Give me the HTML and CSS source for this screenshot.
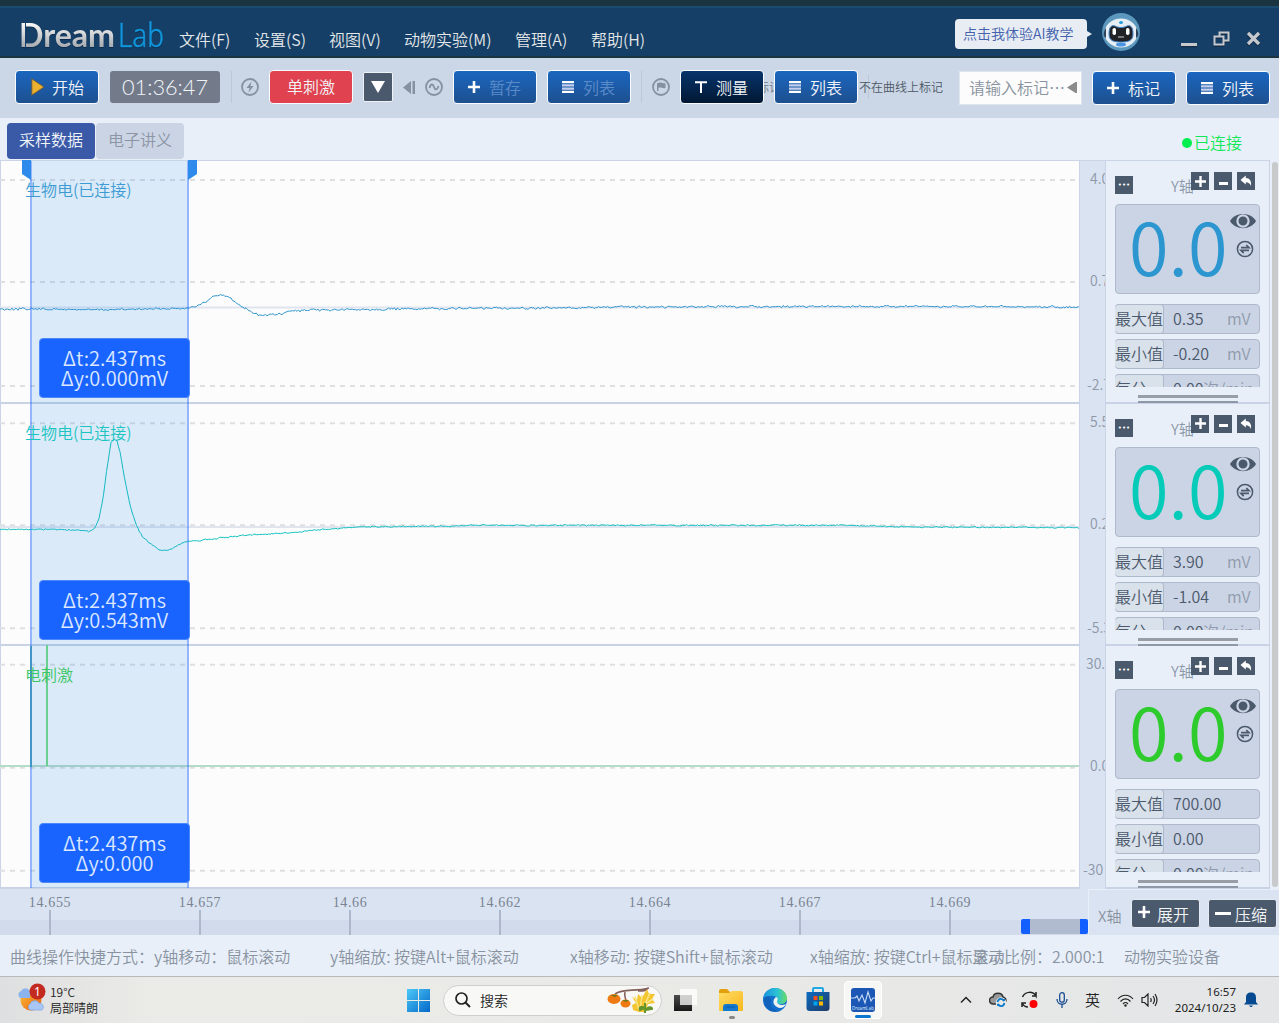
FILE: index.html
```html
<!DOCTYPE html>
<html lang="zh-CN">
<head>
<meta charset="utf-8">
<title>DreamLab</title>
<link rel="stylesheet" href="styles.css">
</head>
<body>
<svg class="defs" width="0" height="0" aria-hidden="true">
  <defs>
    <linearGradient id="silver" x1="0" y1="0" x2="0" y2="1"><stop offset="0.25" stop-color="#f6f6f6"/><stop offset="0.8" stop-color="#a9adb2"/></linearGradient>
    <linearGradient id="win" x1="0" y1="0" x2="1" y2="1"><stop offset="0" stop-color="#4cc8f8"/><stop offset="1" stop-color="#0568c8"/></linearGradient>
    <linearGradient id="sun" x1="0" y1="0" x2="1" y2="1"><stop offset="0" stop-color="#f8c13a"/><stop offset="1" stop-color="#ee5f12"/></linearGradient>
    <linearGradient id="folder" x1="0" y1="0" x2="1" y2="1"><stop offset="0" stop-color="#ffdc66"/><stop offset="1" stop-color="#f8b71c"/></linearGradient>
    <linearGradient id="edge" x1="0" y1="0" x2="1" y2="0"><stop offset="0" stop-color="#1a90e0"/><stop offset="0.6" stop-color="#2cc3d4"/><stop offset="1" stop-color="#6bdc62"/></linearGradient>
    <linearGradient id="store" x1="0" y1="0" x2="1" y2="1"><stop offset="0" stop-color="#0c6cc0"/><stop offset="1" stop-color="#213b68"/></linearGradient>
    <linearGradient id="dark" x1="0" y1="0" x2="0" y2="1"><stop offset="0" stop-color="#4a4a4a"/><stop offset="1" stop-color="#171717"/></linearGradient>
    <symbol id="plus" viewBox="0 0 12 12"><path d="M6 0v12M0 6h12" stroke="#fff" stroke-width="2.6"/></symbol>
    <symbol id="list" viewBox="0 0 12 12"><path d="M0 1.2h12M0 10.8h12" stroke="#fff" stroke-width="2.2"/><path d="M0 4.4h12M0 7.6h12" stroke="#c3cfee" stroke-width="2.2"/></symbol>
    <symbol id="back" viewBox="0 0 12 12"><path d="M0.5 5 5.800 0.600v2.400c3.900 0.200 5.900 2.900 5.200 8-1-2.700-2.600-3.800-5.200-3.800v2.200z" fill="#fff"/></symbol>
    <symbol id="eye" viewBox="0 0 26 16"><path d="M0 8C5-1.500 21-1.500 26 8 21 17.500 5 17.500 0 8z" fill="#4b596c"/><circle cx="13" cy="8" r="5.600" fill="none" stroke="#cbd4e4" stroke-width="2.200"/></symbol>
    <symbol id="swap" viewBox="0 0 18 18"><circle cx="9" cy="9" r="7.600" fill="none" stroke="#4b596c" stroke-width="1.500"/><path d="M5 7.700h8L10.300 5M13 10.400H5l2.700 2.700" fill="none" stroke="#4b596c" stroke-width="1.700"/></symbol>
  </defs>
</svg>

<header class="titlebar">
  <svg class="logo" width="152" height="38" viewBox="0 0 152 38">
    <text x="1" y="32" class="logo-a" fill="url(#silver)" textLength="96" lengthAdjust="spacingAndGlyphs">Dream</text>
    <text x="100" y="32" class="logo-b" fill="#1296db" textLength="46" lengthAdjust="spacingAndGlyphs">Lab</text>
    <path d="M7.500 6v27" stroke="#153f66" stroke-width="1"/>
  </svg>
  <nav class="menu"><span>文件(F)</span><span>设置(S)</span><span>视图(V)</span><span>动物实验(M)</span><span>管理(A)</span><span>帮助(H)</span></nav>
  <div class="ai-tip">点击我体验AI教学</div>
  <svg class="robot" width="38" height="38" viewBox="0 0 38 38"><circle cx="19" cy="19" r="19" fill="#5c98bd"/><ellipse cx="19" cy="20" rx="16.500" ry="14.500" fill="#e6edf5"/><path d="M4 15c-3 4-3 8 0 10zM34 15c3 4 3 8 0 10z" fill="#2c4158"/><path d="M7 21c0-8 3-9 6-8 4 2 8 2 12 0 3-1 6 0 6 8 0 7-5 8-12 8S7 28 7 21z" fill="#202225" stroke="#3f82cc" stroke-width="1"/><rect x="10.500" y="15" width="3.500" height="7" rx="1.700" fill="#fff"/><rect x="24" y="15" width="3.500" height="7" rx="1.700" fill="#fff"/><path d="M16 24h6" stroke="#999" stroke-width="1.500"/><ellipse cx="19" cy="9.500" rx="2" ry="1.500" fill="#239bdf"/><ellipse cx="19" cy="31.500" rx="5" ry="2" fill="#4b95e2"/></svg>
  <svg class="wincontrols" width="84" height="20" viewBox="0 0 84 20"><g fill="none" stroke="#132f4d" transform="translate(0 1.500)"><path d="M1 15.500h16" stroke-width="3"/><path d="M34.500 7.500h9v8h-9zM39.500 7V3.500h9v8H44" stroke-width="2"/><path d="M68 4l11 11M79 4 68 15" stroke-width="3.200"/></g><g fill="none" stroke="#c5c8cc"><path d="M1 15.500h16" stroke-width="3"/><path d="M34.500 7.500h9v8h-9zM39.500 7V3.500h9v8H44" stroke-width="2"/><path d="M68 4l11 11M79 4 68 15" stroke-width="3.200"/></g></svg>
</header>

<section class="toolbar">
  <div class="btn"><svg width="14" height="18" viewBox="0 0 14 18"><path d="M.8.800 13 9 .8 17.200z" fill="#edb02f" stroke="#6d5c3c"/></svg><span>开始</span></div>
  <div class="clock"><svg width="86" height="24" viewBox="0 0 86 24"><text x="0" y="20" textLength="86" lengthAdjust="spacingAndGlyphs">01:36:47</text></svg></div>
  <i class="divider"></i>
  <svg class="round" width="18" height="18" viewBox="0 0 18 18"><circle cx="9" cy="9" r="8"/><path class="solid" d="M10.500 3.500 5.500 10h3l-1 4.800L12.500 8h-3z"/></svg>
  <div class="btn red"><span>单刺激</span></div>
  <div class="drop"><svg width="14" height="12" viewBox="0 0 14 12"><path d="M0 0h14L7 12z" fill="#fff"/></svg></div>
  <svg class="prev" width="12" height="13" viewBox="0 0 12 13"><path d="M0 6.500 8 0v13zM9.500 0H12v13H9.500z" fill="#8591a0"/></svg>
  <svg class="round wave" width="18" height="18" viewBox="0 0 18 18"><circle cx="9" cy="9" r="8"/><path d="M4.500 10c1-4.500 3.500-4.500 4.500-1s3.500 3 4.500-1"/></svg>
  <div class="btn off save"><svg width="12" height="12"><use href="#plus"/></svg><span>暂存</span></div>
  <div class="btn off"><svg width="12" height="12"><use href="#list"/></svg><span>列表</span></div>
  <i class="divider second"></i>
  <svg class="round" width="18" height="18" viewBox="0 0 18 18"><circle cx="9" cy="9" r="8"/><path class="solid" d="M5 5v8h1.500v-3c2-1.500 4 1 7 0V5c-3 1-5-1.500-7 0z"/></svg>
  <div class="btn dark"><svg width="12" height="12" viewBox="0 0 12 12"><path d="M0 1.200h12M6 1v11" stroke="#fff" stroke-width="2"/></svg><span>测量</span></div>
  <div class="peek"><span>标记</span></div>
  <div class="btn flush"><svg width="12" height="12"><use href="#list"/></svg><span>列表</span></div>
  <div class="note">不在曲线上标记</div>
  <div class="mark-input"><span>请输入标记⋯</span><svg width="10" height="11" viewBox="0 0 10 11"><path d="M0 5.500 8.500 0H10v11H8.500z" fill="#8b8b8b"/></svg></div>
  <div class="btn low"><svg width="12" height="12"><use href="#plus"/></svg><span>标记</span></div>
  <div class="btn low"><svg width="12" height="12"><use href="#list"/></svg><span>列表</span></div>
</section>

<section class="tabs">
  <span class="tab active">采样数据</span><span class="tab">电子讲义</span>
  <span class="online"><i></i>已连接</span>
</section>

<main class="work">
  <div class="plots" id="plots">
    <div class="plot"><svg width="1080" height="243"><path class="grid" d="M0 20h1080M0 122h1080M0 226h1080"/><path class="zero" d="M0 147.500h1080"/><path class="trace blue" id="trace1"/></svg></div>
    <div class="plot"><svg width="1080" height="243"><path class="grid" d="M0 20.300h1080M0 122.300h1080M0 225.300h1080"/><path class="zero" d="M0 124h1080"/><path class="trace teal" id="trace2"/></svg></div>
    <div class="plot"><svg width="1080" height="243"><path class="grid" d="M0 19.700h1080M0 122.700h1080M0 225.700h1080"/><path d="M0 121h1080" stroke="#b5dcc6" stroke-width="1.800"/><path d="M47 0v121" stroke="#7bdc84" stroke-width="2"/></svg></div>
    <div class="selection"><i class="grip left"></i><i class="grip right"></i></div>
    <i class="stim"></i>
    <span class="name n1">生物电(已连接)</span><span class="name n2">生物电(已连接)</span><span class="name n3">电刺激</span>
    <div class="delta d1">Δt:2.437ms<br>Δy:0.000mV</div><div class="delta d2">Δt:2.437ms<br>Δy:0.543mV</div><div class="delta d3">Δt:2.437ms<br>Δy:0.000</div>
  </div>
  <div class="yaxis">
    <svg width="25" height="243"><text x="10" y="24">4.0</text><text x="10" y="126">0.7</text><text x="7" y="230">-2.7</text></svg>
    <svg width="25" height="243"><text x="10" y="24">5.5</text><text x="10" y="126">0.2</text><text x="7" y="230">-5.3</text></svg>
    <svg width="25" height="243"><text x="6" y="24">30.0</text><text x="10" y="126">0.0</text><text x="3" y="230">-30</text></svg>
  </div>
  <div class="panels">
    <div class="panel blue">
      <div class="ptools"><b class="dots">•••</b><span>Y轴</span><b><svg width="11" height="11"><use href="#plus"/></svg></b><b class="minus"><i></i></b><b><svg width="12" height="12"><use href="#back"/></svg></b></div>
      <div class="value"><strong>0.0</strong><div><svg width="26" height="16"><use href="#eye"/></svg><svg width="18" height="18"><use href="#swap"/></svg></div></div>
      <div class="stats"><p><label>最大值</label><span>0.35</span><em>mV</em></p><p><label>最小值</label><span>-0.20</span><em>mV</em></p><p class="rate"><label>每分</label><span>0.00</span><em>次/min</em></p></div>
      <i class="resize"></i>
    </div>
    <div class="panel teal">
      <div class="ptools"><b class="dots">•••</b><span>Y轴</span><b><svg width="11" height="11"><use href="#plus"/></svg></b><b class="minus"><i></i></b><b><svg width="12" height="12"><use href="#back"/></svg></b></div>
      <div class="value"><strong>0.0</strong><div><svg width="26" height="16"><use href="#eye"/></svg><svg width="18" height="18"><use href="#swap"/></svg></div></div>
      <div class="stats"><p><label>最大值</label><span>3.90</span><em>mV</em></p><p><label>最小值</label><span>-1.04</span><em>mV</em></p><p class="rate"><label>每分</label><span>0.00</span><em>次/min</em></p></div>
      <i class="resize"></i>
    </div>
    <div class="panel green">
      <div class="ptools"><b class="dots">•••</b><span>Y轴</span><b><svg width="11" height="11"><use href="#plus"/></svg></b><b class="minus"><i></i></b><b><svg width="12" height="12"><use href="#back"/></svg></b></div>
      <div class="value"><strong>0.0</strong><div><svg width="26" height="16"><use href="#eye"/></svg><svg width="18" height="18"><use href="#swap"/></svg></div></div>
      <div class="stats"><p><label>最大值</label><span>700.00</span></p><p><label>最小值</label><span>0.00</span></p><p class="rate"><label>每分</label><span>0.00</span><em>次/min</em></p></div>
      <i class="resize"></i>
    </div>
  </div>
  <div class="scroll"><i></i></div>
</main>

<section class="xaxis">
  <div class="ticks">
    <span>14.655</span><span>14.657</span><span>14.66</span><span>14.662</span><span>14.664</span><span>14.667</span><span>14.669</span>
    <i class="range"></i>
  </div>
  <div class="zoom"><span>X轴</span><button><svg width="12" height="12"><use href="#plus"/></svg>展开</button><button class="shrink"><i></i>压缩</button></div>
</section>

<section class="status"><span>曲线操作快捷方式：y轴移动：鼠标滚动</span><span>y轴缩放: 按键Alt+鼠标滚动</span><span>x轴移动: 按键Shift+鼠标滚动</span><span class="narrow">x轴缩放: 按键Ctrl+鼠标滚动</span><span class="ratio">显示比例：2.000:1</span><span class="device">动物实验设备</span></section>

<footer class="taskbar">
  <svg class="weather" width="28" height="30" viewBox="0 0 28 30"><circle cx="13" cy="17" r="10.500" fill="url(#sun)"/><path d="M2 15a4 4 0 0 1 1-7 5 5 0 0 1 9 0v7z" fill="#8bb4ee"/><path d="M12 27a3.500 3.500 0 0 1 0-6 5 5 0 0 1 9-1 4 4 0 0 1 3 7z" fill="#a9c7f5" stroke="#6e9be4" stroke-width=".6"/><circle cx="19.500" cy="8.500" r="8" fill="#c32a20"/><text x="19.500" y="13" text-anchor="middle" class="badge">1</text></svg>
  <div class="forecast">19°C<br>局部晴朗</div>
  <svg class="start" width="23" height="23" viewBox="0 0 23 23"><path d="M0 0h11v11H0zM12 0h11v11H12zM0 12h11v11H0zM12 12h11v11H12z" fill="url(#win)"/></svg>
  <div class="search"><svg width="16" height="16" viewBox="0 0 16 16"><circle cx="6.500" cy="6.500" r="5.500" fill="none" stroke="#222" stroke-width="1.700"/><path d="m10.500 10.500 4.500 4.500" stroke="#222" stroke-width="2"/></svg><span>搜索</span>
    <svg class="fruit" width="50" height="28" viewBox="0 0 50 28"><path d="M8 8c8-6 20-2 34-6M18 6c-1 4 0 5 1 8M31 5c5 0 8 0 10-3" fill="none" stroke="#85615e" stroke-width="1.600"/><ellipse cx="7" cy="13" rx="6.500" ry="5" fill="#ef7a12"/><ellipse cx="18.500" cy="17.500" rx="5" ry="4" fill="#ef7a12"/><path d="M3 9h8l-3 2zM15 14h7l-3 2z" fill="#687c1e"/><path d="M25 11l5 3 1-6 4 4 5-9 2 5 6 0-3 5 3 4-7 1-3 8-6 0-6-2-1-5 4-2z" fill="#f3c530"/><path d="M28 10l4 14M35 9l-2 16M43 7l-5 11M46 13l-8 5" stroke="#fae582" stroke-width="1.500"/><path d="M38 17v10M38 22c-4-3-6 0-5 2zM39 24c2-4 6-3 6-1z" stroke="#65942a" stroke-width="2" fill="#65942a"/></svg></div>
  <svg class="taskview" width="24" height="24" viewBox="0 0 24 24"><path d="M0 7h18v16H0z" fill="url(#dark)"/><path d="M6 1h17v16H6z" fill="#fff" fill-opacity=".75"/></svg>
  <div class="app"><svg width="26" height="24" viewBox="0 0 26 24"><path d="M1 3q0-2 2-2h6l3 3h11q2 0 2 2v16H1z" fill="#e4a00c"/><path d="M1 5h10l3-2h9q2 0 2 2v17q0 1-1 1H2q-1 0-1-1z" fill="url(#folder)"/><path d="M5 23v-4q0-3 3-3h9q3 0 3 3v4z" fill="#1479cd"/><path d="M8 19h9" stroke="#075ba8"/></svg><i></i></div>
  <svg class="edge" width="24" height="24" viewBox="0 0 24 24"><circle cx="12" cy="12" r="12" fill="#1470cd"/><path d="M0 11C1 4 6 0 12 0c7 0 12 5 12 10 0 4-3 6-6 6-4 0-5-2-4-4 1-5-8-6-14-1z" fill="url(#edge)"/><path d="M13 9c3 1 1 4 1 5 1 3 5 4 9 2-2 4-6 5-9 3-4-2-5-7-1-10z" fill="#eef1f2"/><path d="M8 12c-2 6 3 11 9 11-9 3-17-4-16-13 2-3 6-2 7 2z" fill="#0d58ad" fill-opacity=".6"/></svg>
  <svg class="store" width="24" height="26" viewBox="0 0 24 26"><path d="M7 7V3q0-1 1-1h8q1 0 1 1v4" fill="none" stroke="#22a9e5" stroke-width="2"/><path d="M.5 6h23v16q0 3-3 3h-17q-3 0-3-3z" fill="url(#store)"/><path d="M7.500 10h4v4h-4z" fill="#f25022"/><path d="M13 10h4v4h-4z" fill="#7fba00"/><path d="M7.500 15.500h4v4h-4z" fill="#00a4ef"/><path d="M13 15.500h4v4h-4z" fill="#ffb900"/></svg>
  <div class="app current"><svg width="24" height="24" viewBox="0 0 24 24"><rect width="24" height="24" rx="3" fill="#1d57b5"/><path d="M0 10h4l2-2 2 5 3-6 3 8 3-11 3 9 2-3h2" fill="none" stroke="#c7dcf5" stroke-width="1.100"/><text x="12" y="22" text-anchor="middle" class="mini">DreamLab</text></svg><i></i></div>
  <svg class="chev" width="12" height="8" viewBox="0 0 12 8"><path d="m1 6.500 5-5 5 5" fill="none" stroke="#222" stroke-width="1.500"/></svg>
  <svg class="cloud" width="18" height="16" viewBox="0 0 18 16"><path d="M4 12a3.500 3.500 0 0 1 0-7c1-5 9-5 10 0q3 1 3 4l-7 3z" fill="#999" stroke="#333" stroke-width="1.500"/><circle cx="12" cy="10.500" r="5.300" fill="#e8e9e9"/><path d="M8.500 10c1-4 5-4 6.500-1V7M15.500 11c-1 4-5 4-6.500 1v2" fill="none" stroke="#0878c8" stroke-width="1.800"/></svg>
  <svg class="sync" width="18" height="18" viewBox="0 0 18 18"><path d="M1.500 6C4 0 12 0 15 5V1M15 5h-4M1 16v-4h4M1 12c1 2 3 4 6 4" fill="none" stroke="#222" stroke-width="1.500"/><circle cx="12.500" cy="13" r="4" fill="#f00"/></svg>
  <svg class="mic" width="12" height="16" viewBox="0 0 12 16"><rect x="3.700" y=".7" width="4.600" height="9.500" rx="2.300" fill="none" stroke="#1b4e93" stroke-width="1.300"/><path d="M1 7c0 7 10 7 10 0M6 12.500V16" fill="none" stroke="#1b4e93" stroke-width="1.300"/></svg>
  <span class="ime">英</span>
  <svg class="wifi" width="17" height="13" viewBox="0 0 17 13"><path d="M1 5c4-5 11-5 15 0M3.500 7.500c3-3.500 7-3.500 10 0M6 10c2-2 3-2 5 0" fill="none" stroke="#222" stroke-width="1.200"/><circle cx="8.500" cy="11.500" r="1.200" fill="#222"/></svg>
  <svg class="sound" width="17" height="14" viewBox="0 0 17 14"><path d="M1 4.500v5h2.500L7 13V1L3.500 4.500zM9.500 5q1.500 2 0 4M12 3q3 4 0 8M14 1q4 6 0 12" fill="none" stroke="#222" stroke-width="1.200"/></svg>
  <div class="date">16:57<br>2024/10/23</div>
  <svg class="bell" width="14" height="16" viewBox="0 0 14 16"><path d="M7 .5c3.500 0 5 2 5 5V10l2 2.500H0L2 10V5.500c0-3 1.500-5 5-5zM5 13.500h4q-2 3-4 0z" fill="#054a91"/></svg>
</footer>
<script src="traces.js"></script>
</body>
</html>
```
FILE: traces.js
```js
// Builds the sampled curves from key points, with a small repeatable jitter.
function trace(points, top, noise, seed) {
  let s = seed, d = '', k = 0;
  for (let x = 0; x <= 1080; x += 1.5) {
    while (k < points.length - 2 && x > points[k + 1][0]) k++;
    const [x0, y0] = points[k], [x1, y1] = points[k + 1];
    s = (s * 1103515245 + 12345) % 2147483648;
    const r = s / 2147483648 - 0.5;
    const y = y0 + (y1 - y0) * (x - x0) / (x1 - x0) + r * Math.abs(r) * 4 * noise - top;
    d += (x ? 'L' : 'M') + x + ' ' + y.toFixed(1);
  }
  return d;
}
document.getElementById('trace1').setAttribute('d', trace([[0,309],[30,309],[100,309.8],[150,309],[187,308],[200,305],[206,302],[213,296.5],[219,294.5],[229,297],[236,303],[245,308],[252,312.5],[259,315],[268,315],[282,314],[290,311],[320,310],[400,309],[500,308],[560,308],[650,306.8],[900,306.5],[1081,307]], 160, 1.3, 7));
document.getElementById('trace2').setAttribute('d', trace([[0,529],[60,529],[80,530],[90,531],[95,528],[99,518],[103,498],[107,468],[111,443],[114,438.5],[117,441],[120,452],[124,475],[130,505],[136,524],[142,536],[150,543],[160,550],[168,550],[178,545],[187,541],[200,540],[245,535],[290,532.5],[320,529.5],[360,526.5],[450,526],[480,525],[850,525],[900,526.5],[1081,527.3]], 402.7, 0.8, 21));
```
FILE: styles.css
```css
* { box-sizing: border-box; }
body { margin: 0; width: 1279px; height: 1023px; overflow: hidden; background: #e8eff9; font: 350 16px/24px "Noto Sans CJK SC DemiLight", "Noto Sans CJK SC", sans-serif; color: #6b7585; display: flex; flex-direction: column; white-space: nowrap; }
i, em { font-style: normal; display: block; }
svg { display: block; flex: none; }
.defs { position: absolute; }

.titlebar { flex: none; height: 58px; display: flex; align-items: flex-start; background: #153f66; border-top: 6px solid #1a3440; border-bottom: 2px solid #1a3440; box-shadow: inset 0 2px #1a4c72; color: #e4e7e9; }
.logo { margin: 9px 0 0 18px; filter: drop-shadow(0 1px 0 #0d2d50); }
.logo-a { font: 700 33px Lato, sans-serif; }
.logo-b { font: 300 33px "Noto Sans", sans-serif; stroke: #1296db; stroke-width: .5; }
.menu { display: flex; margin: 21px 0 0 9px; width: 776px; }
.menu span { width: 75px; }
.menu span:nth-child(4) { width: 111px; }
.menu span:nth-child(5) { width: 76px; }
.ai-tip { position: relative; width: 132px; height: 30px; margin-top: 13px; padding-left: 8px; border-radius: 4px; background: #e8ecf3; color: #4361ad; font-size: 14px; line-height: 29px; }
.ai-tip::after { content: ""; position: absolute; left: 132px; top: 12px; border: solid transparent; border-width: 3px 0 3px 5px; border-left-color: #e8ecf3; }
.robot { margin: 7px 0 0 15px; }
.wincontrols { margin: 23px 0 0 40px; }

.toolbar { flex: none; height: 60px; display: flex; align-items: flex-start; padding: 12px 0 0 15px; background: #cbd7e6; }
.btn { flex: none; position: relative; width: 84px; height: 34px; margin-left: 10px; display: flex; align-items: center; border: 1px solid #f8fbff; border-radius: 4px; background: linear-gradient(#1b66c0, #1d508f); color: #f1f4f8; }
.btn:first-child { margin-left: 0; }
.btn svg { margin-left: 14px; }
.btn span { margin-left: 9px; }
.btn:first-child svg { margin-left: 15px; }
.btn:first-child span { margin-left: 7px; }
.btn.red { background: #e0424f; }
.btn.red span { margin: -2px 0 0 17px; }
.btn.off span { color: #5c8bc9; }
.btn.save { margin-left: 10px; }
.btn.dark { background: linear-gradient(#07346c, #011833); }
.btn.flush { margin-left: 0; }
.btn.low { margin-top: 1px; }
.clock { flex: none; width: 110px; height: 32px; margin: 1px 0 0 11px; padding: 4px 12px; border-radius: 3px; background: #737b8b; }
.clock text { font: 300 22px Lato, sans-serif; fill: #f1f4f8; }
.divider { flex: none; width: 1px; height: 32px; margin: 1px 0 0 11px; background: #bdc8d5; }
.divider.second { margin-left: 10px; }
.round { margin: 8px 0 0 9px; fill: none; stroke: #8591a0; stroke-width: 1.8; }
.round .solid { fill: #8591a0; stroke: none; }
.divider.second + .round { margin-left: 10px; }
.round.wave { margin-left: 10px; }
.drop { flex: none; width: 30px; height: 30px; margin: 2px 0 0 10px; display: grid; place-items: center; border: 1px solid #eef2f7; border-radius: 2px; background: #4b596c; }
.prev { margin: 11px 0 0 10px; }
.peek { flex: none; width: 10px; margin-top: 5px; overflow: hidden; font-size: 12px; display: flex; justify-content: center; }
.note { flex: none; width: 85px; margin: 5px 0 0 1px; font-size: 12px; color: #4d5866; background: linear-gradient(90deg, transparent 9px, #bdc8d5 9px, #bdc8d5 10px, transparent 10px); }
.mark-input { flex: none; width: 123px; height: 34px; margin: 1px 0 0 15px; padding: 0 4px 2px 9px; display: flex; align-items: center; justify-content: space-between; border: 1px solid #dfe6f0; background: #fcfcfc; color: #8993a0; }

.tabs { flex: none; height: 42px; display: flex; align-items: flex-start; gap: 1px; padding: 5px 0 0 7px; }
.tab { flex: none; width: 88px; height: 36px; border-radius: 4px; background: #cbd4e4; color: #8b95a4; text-align: center; line-height: 33px; }
.tab.active { background: #3a5aa7; color: #eff3fa; }
.online { display: flex; align-items: center; gap: 2px; margin: 7px 0 0 997px; color: #10e858; }
.online i { width: 10px; height: 10px; margin-top: 2px; border-radius: 50%; background: #00ef50; }

.work { flex: none; height: 728px; display: grid; grid-template-columns: 1079px 27px 164px 9px; }
.plots, .yaxis, .panels { display: grid; grid-template-rows: repeat(3, 242.66px); }
.plots { position: relative; background: #fcfcfc; border-top: 1px solid #c9d4e6; border-left: 1px solid #c9d4e6; }
.plot { overflow: hidden; margin: -1px 0 0 -1px; border-bottom: 2px solid #c9d3e6; }
.plot svg { height: 243px; }
.grid { stroke: #dedfe3; stroke-width: 2; stroke-dasharray: 5 5; }
.zero { stroke: #dfe4ef; stroke-width: 2; }
.trace { fill: none; stroke-width: 1; }
.trace.blue { stroke: #3197ce; }
.trace.teal { stroke: #12c2c0; }
.selection { position: absolute; left: 29px; top: 0; width: 159px; height: 727px; background: rgba(30, 135, 230, .15); border: solid rgba(25, 100, 255, .46); border-width: 0 2px; background-clip: padding-box; }
.grip { position: absolute; top: -1px; width: 9px; height: 20px; background: #2e8bec; }
.grip.left { left: -10px; clip-path: polygon(0 0, 100% 0, 100% 100%, 0 70%); }
.grip.right { right: -10px; clip-path: polygon(0 0, 100% 0, 100% 70%, 0 100%); }
.stim { position: absolute; left: 29px; top: 485px; width: 2px; height: 121px; background: #4395c6; }
.name { position: absolute; left: 24px; color: #3c9bd3; }
.n1 { top: 16px; }
.n2 { top: 259px; color: #1bc4c3; }
.n3 { top: 501px; color: #3bc765; }
.delta { position: absolute; left: 38px; width: 151px; height: 60px; padding-top: 9px; border-radius: 4px; background: #1964ff; border: 1px solid #4d87fc; color: #dce8ff; font-size: 20px; line-height: 20px; text-align: center; }
.d1 { top: 177px; }
.d2 { top: 419px; }
.d3 { top: 662px; }
.yaxis { background: #dae3f2; border: 1px solid #c9d4e6; border-bottom: 0; }
.yaxis svg { width: 25px; height: 243px; margin-top: -1px; }
.yaxis text { font-size: 14px; fill: #8d98a8; }

.panels { border-right: 1px solid #c9d4e6; border-top: 1px solid #c9d4e6; }
.panel { margin-top: -1px; padding: 12px 9px 0; border-bottom: 2px solid #c9d3e6; }
.ptools { height: 32px; display: flex; align-items: flex-start; }
.ptools b { flex: none; width: 18px; height: 18px; margin-right: 5px; display: grid; place-items: center; background: #4b596c; position: relative; }
.ptools b:last-child { margin-right: 0; }
.ptools .dots { margin: 4px 0 0; color: #fff; font: 7px/18px "DejaVu Sans", sans-serif; }
.ptools span { width: 20px; margin: 2px 0 0 38px; color: #8d98a8; font-size: 15px; }
.minus i { width: 9px; height: 3px; background: #fff; margin-top: 4px; }
.value { width: 145px; height: 90px; display: flex; justify-content: space-between; border: 1px solid #aeb9cb; border-radius: 4px; background: #cbd4e4; padding: 8px 3px 0 13px; }
.value strong { font-weight: 350; font-size: 72px; line-height: 78px; margin-top: -7px; }
.value svg:last-child { margin: 11px 0 0 6px; }
.blue strong { color: #2b96cf; }
.teal strong { color: #06cbb9; }
.green strong { color: #2dcb2c; }
.stats { height: 93px; padding-top: 10px; overflow: hidden; }
.stats p { position: relative; width: 145px; height: 30px; margin: 0 0 5px; display: flex; border: 1px solid #aeb9cb; border-radius: 4px; background: #cbd4e4; line-height: 26px; color: #4b596c; }
.stats label { width: 49px; height: 30px; margin: -1px 9px 0 -1px; border: solid #aeb9cb; border-width: 1px 1px 1px 0; border-radius: 4px; background: #d9e1eb; }
.stats em { color: #8f9aac; position: absolute; left: 111px; }
.stats .rate em { left: 87px; }
.resize { width: 100px; height: 8px; margin: 8px 0 0 23px; border-top: 3px solid #999da5; border-bottom: 2px solid #8e98a7; position: relative; }
.scroll { padding: 2px 0 0 2px; }
.scroll i { width: 6px; height: 725px; border-radius: 3px; background: #c8c9cb; }

.xaxis { flex: none; height: 47px; display: flex; padding-top: 1px; }
.ticks { flex: none; position: relative; width: 1088px; display: flex; background: linear-gradient(#dae3f2 31px, #d1dbeb 31px); padding-top: 5px; margin-right: 1px; }
.ticks span { flex: none; width: 150px; height: 41px; padding: 1px 50px 0 0; text-align: center; font: 14px/16px "Liberation Serif", serif; letter-spacing: .65px; color: #788391; background: linear-gradient(#adb8ca, #adb8ca) 49px 16px / 2px 25px no-repeat; }
.range { position: absolute; left: 1021px; top: 30px; width: 67px; height: 15px; border: solid #145fff; border-width: 0 8px 0 9px; border-radius: 2px; background: #b0bbd0; }
.zoom { flex: 1; display: flex; padding: 10px 0 0 9px; margin-top: 1px; background: #dae3f2; color: #8993a0; }
.zoom span { width: 33px; margin-top: 4px; font-size: 15px; }
.zoom button { flex: none; width: 69px; height: 29px; margin: -1px 8px 0 0; padding: 0 0 0 6px; display: flex; align-items: center; gap: 7px; border: 1px solid #e7ecf4; border-radius: 3px; background: #4b596c; color: #f2f4f7; font: inherit; }
.zoom button svg { margin-top: -4px; }
.zoom .shrink { gap: 4px; margin-right: 0; }
.shrink i { width: 16px; height: 3px; background: #fff; }

.status { flex: none; height: 41px; display: flex; padding: 9px 0 0 10px; color: #8993a0; }
.status span { flex: none; width: 240px; }
.status span:first-child { width: 320px; }
.status .narrow { width: 162px; }
.status .ratio { width: 152px; }
.status .device { width: 100px; }

.taskbar { flex: none; height: 47px; display: flex; align-items: center; border-top: 1px solid #b9b9ba; background: linear-gradient(90deg, #dedfe0, #ebebe7 12%, #e9e9e6 60%, #e3e5e7); color: #222; font-size: 13px; line-height: 16px; }
.weather { margin: -4px 0 0 18px; }
.badge { font: 12px "Noto Sans", sans-serif; fill: #fff; }
.forecast { width: 70px; margin-left: 4px; font-size: 12px; }
.start { margin-left: 287px; }
.search { width: 219px; height: 31px; margin: 0 0 0 13px; padding: 0 4px 0 11px; display: flex; align-items: center; border: 1px solid #cfcfce; border-radius: 16px; background: #f8f8f6; font-size: 14px; }
.search span { margin-left: 9px; }
.fruit { margin-left: auto; }
.taskview { margin-left: 12px; }
.app { position: relative; width: 38px; height: 38px; display: grid; place-items: center; margin-left: 14px; border-radius: 4px; }
.app i { position: absolute; bottom: 0; left: 17px; width: 6px; height: 3px; border-radius: 2px; background: #888; }
.app.current { margin-left: 14px; background: #f7f7f6; border: 1px solid #fff; }
.app.current i { left: 10px; width: 16px; background: #0b76d1; }
.mini { font: 4.5px Inter, sans-serif; fill: #d9e7f8; }
.edge { margin-left: 13px; }
.store { margin: -2px 0 0 19px; }
.chev { margin-left: 78px; }
.cloud { margin-left: 17px; }
.sync { margin-left: 14px; }
.mic { margin-left: 17px; }
.ime { margin-left: 17px; font-size: 15px; }
.wifi { margin-left: 17px; }
.sound { margin-left: 7px; }
.date { width: 78px; text-align: right; font: 11.5px/16px "Noto Sans", sans-serif; }
.bell { margin-left: 8px; }
```
